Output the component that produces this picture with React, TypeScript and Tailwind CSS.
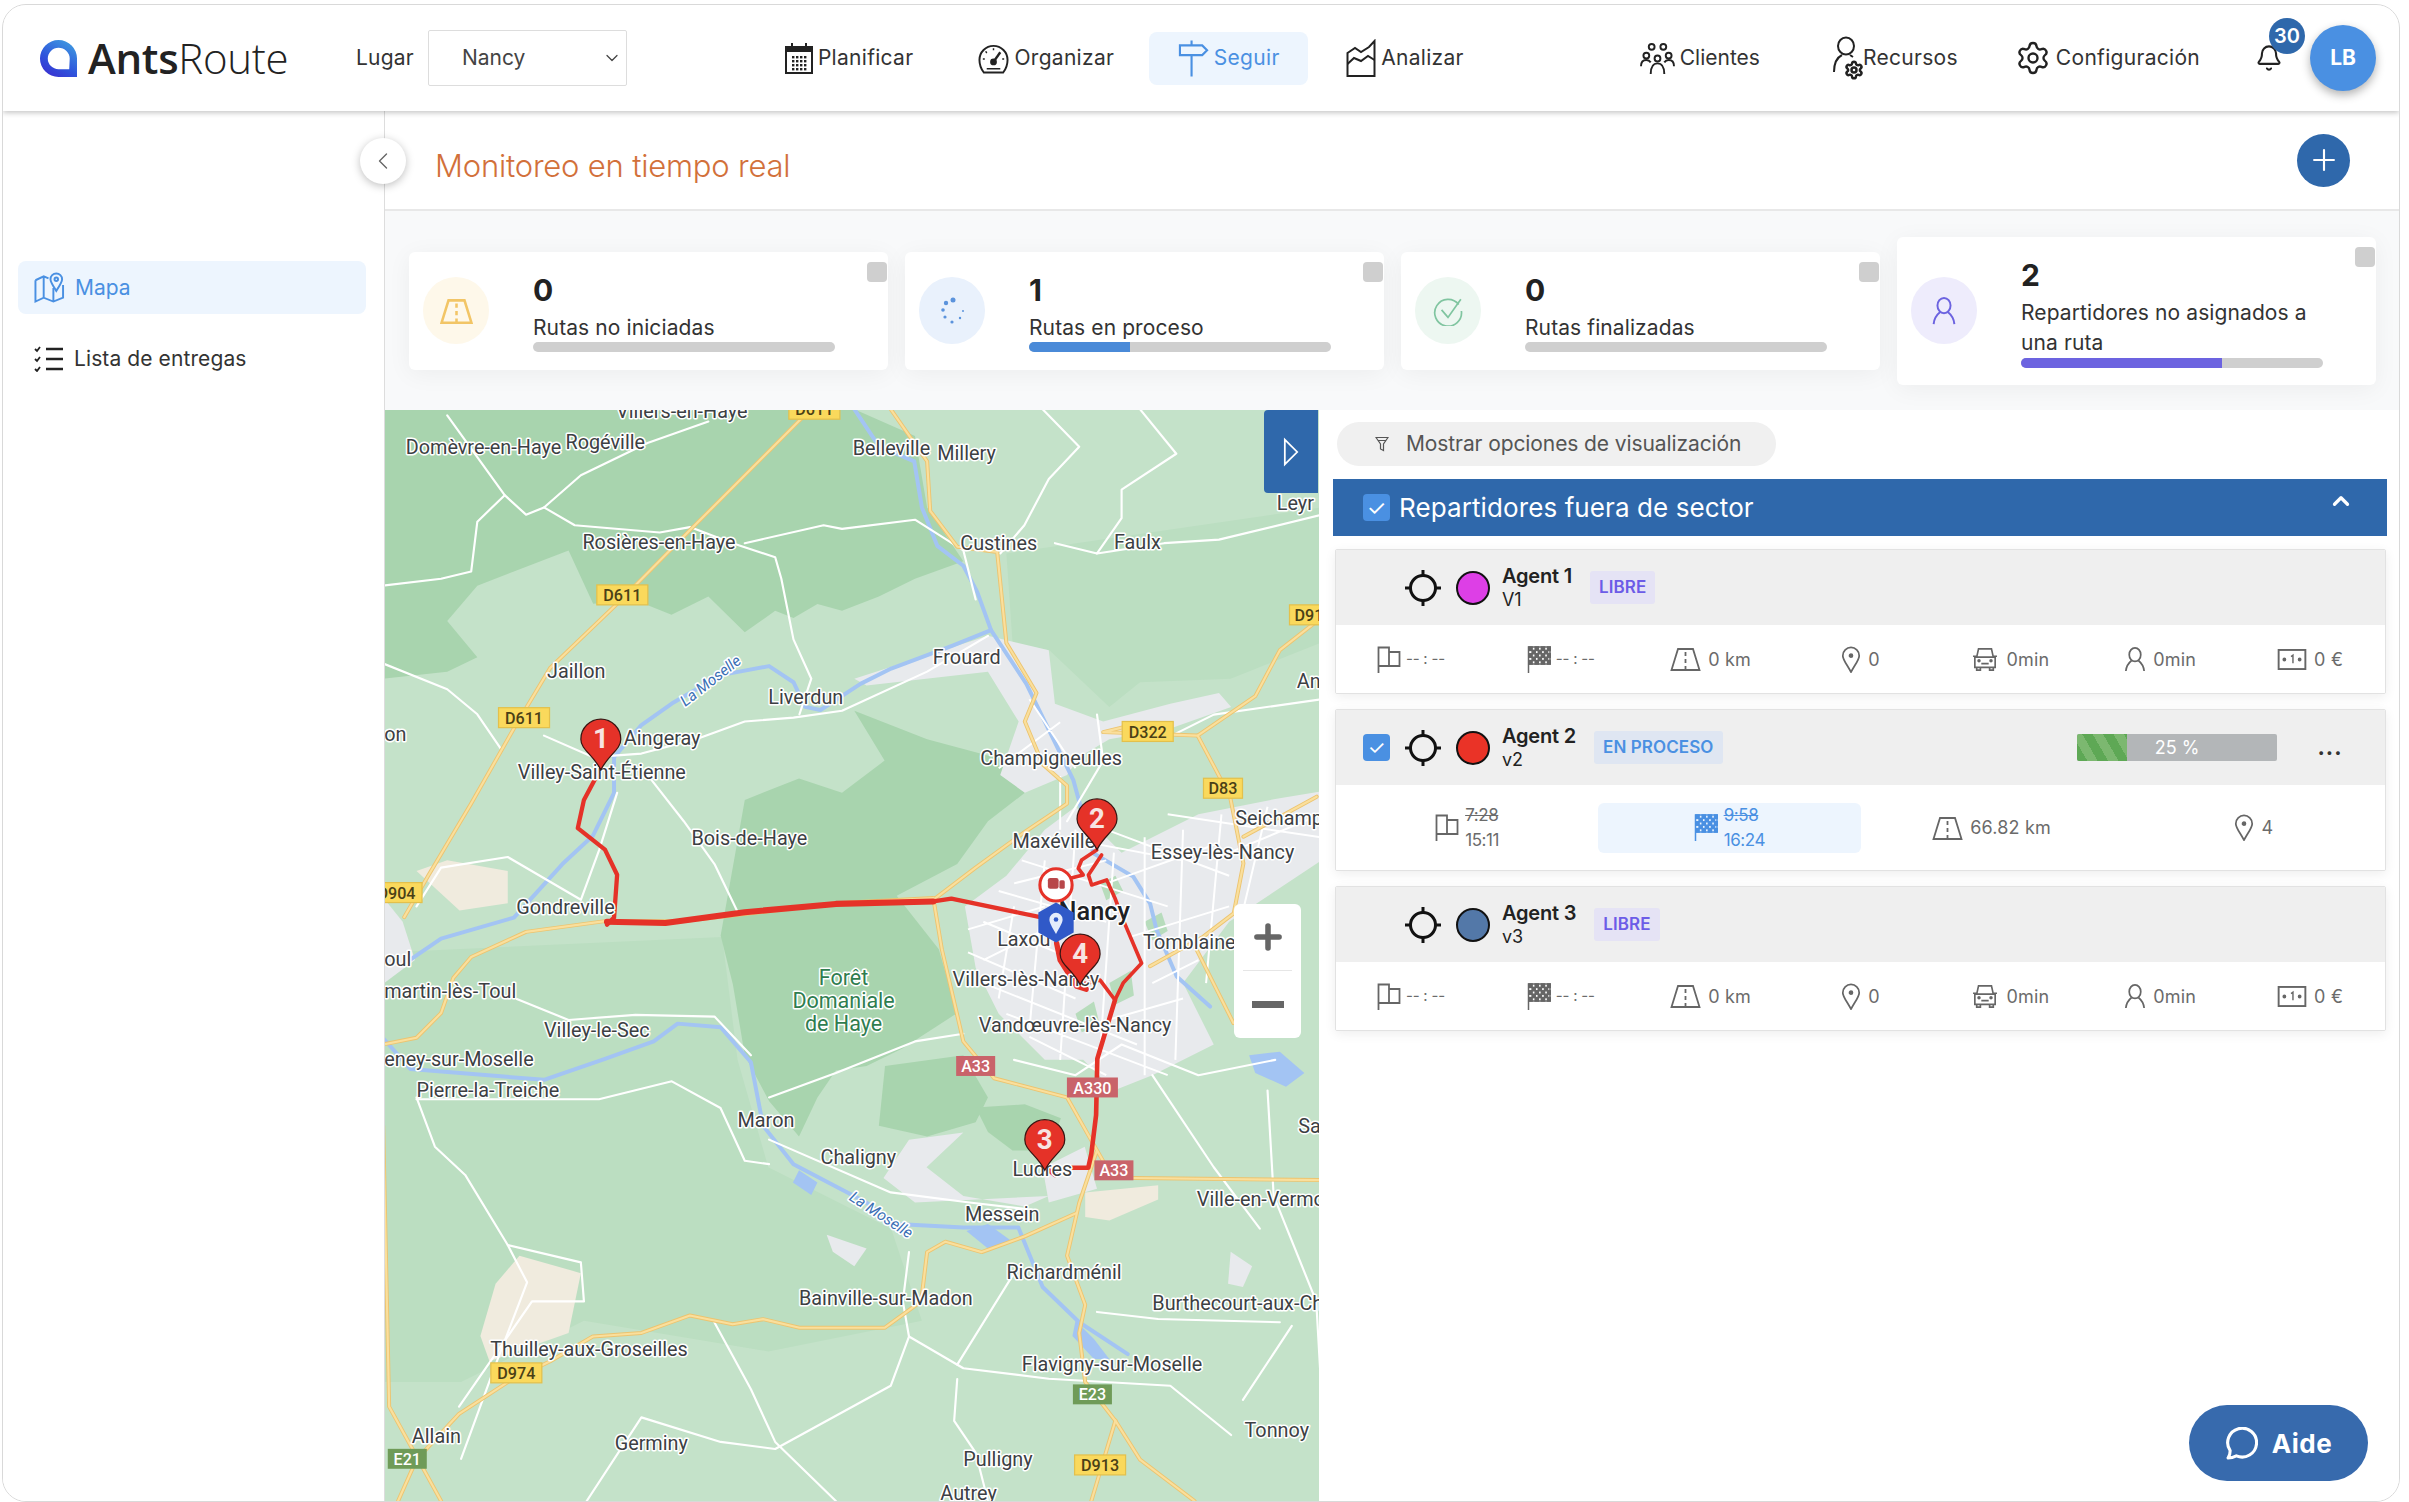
import { Bell, ChevronDown, ChevronLeft, ChevronUp, Plus, Settings } from "lucide-react";

const BLUE = "#4a90e2";

function Logo() {
  return (
    <svg viewBox="0 0 40 40" className="h-[39px] w-[39px] shrink-0">
      <defs>
        <linearGradient id="lg" x1="0.8" y1="0" x2="0.2" y2="1">
          <stop offset="0" stopColor="#3f9be0" />
          <stop offset="0.6" stopColor="#2f55dc" />
          <stop offset="1" stopColor="#3a2fd0" />
        </linearGradient>
      </defs>
      <path
        fill="url(#lg)"
        fillRule="evenodd"
        d="M20 1A19 19 0 0 0 20 39H39V20A19 19 0 0 0 20 1ZM20 9A11 11 0 1 0 20 31H31L31.500 20A11.500 11 0 0 0 20 9Z"
      />
    </svg>
  );
}

function CalendarIcon() {
  const dots = [];
  for (let r = 0; r < 4; r++) for (let c = 0; c < 4; c++) dots.push(<rect key={`${r}${c}`} x={7 + c * 4} y={13 + r * 4} width="2.400" height="2.400" />);
  return (
    <svg viewBox="0 0 28 31" className="h-[31px] w-[28px]" fill="#222">
      <rect x="1" y="4" width="26" height="26" fill="none" stroke="#222" strokeWidth="2" />
      <rect x="1" y="4" width="26" height="5" />
      <rect x="6" y="0" width="2" height="5" />
      <rect x="20" y="0" width="2" height="5" />
      {dots}
    </svg>
  );
}

function GaugeIcon() {
  return (
    <svg viewBox="0 0 32 34" className="h-[34px] w-[31px]" fill="none" stroke="#222" strokeWidth="2">
      <path d="M6 32C3 28 1.500 24 1.500 19A14.500 14.500 0 0 1 30.500 19C30.500 24 29 28 26 32Z" />
      <path d="M16 21L23 11" strokeWidth="2.500" />
      <circle cx="16" cy="21" r="2.500" fill="#222" />
      <path d="M16 7v2M8 10l1 2M5 18h2M25 18h2M9 28h14" strokeWidth="1.500" />
    </svg>
  );
}

function SignIcon() {
  return (
    <svg viewBox="0 0 32 38" className="h-[38px] w-[31px]" fill="none" stroke={BLUE} strokeWidth="2.200">
      <path d="M14 1v5M2 6h23l5 5-5 5H2ZM14 16v22" />
    </svg>
  );
}

function ChartIcon() {
  return (
    <svg viewBox="0 0 30 38" className="h-[38px] w-[30px]" fill="none" stroke="#222" strokeWidth="2">
      <path d="M1.500 14L9 9L15 13L23 8L28.500 2V37H1.500Z" />
      <path d="M1.500 25L8 19L15 22L22 17L28.500 21" />
    </svg>
  );
}

function ClientsIcon() {
  return (
    <svg viewBox="0 0 36 34" className="h-[33px] w-[35px]" fill="none" stroke="#222" strokeWidth="2">
      <circle cx="12" cy="5" r="3" />
      <circle cx="24" cy="5" r="3" />
      <circle cx="6.500" cy="14" r="3" />
      <circle cx="18" cy="17" r="3" />
      <circle cx="29.500" cy="14" r="3" />
      <path d="M1 25C1 20 3 18.500 6.500 18.500C8.500 18.500 10 19.500 11 21M25 21C26 19.500 27.500 18.500 29.500 18.500C33 18.500 35 20 35 25M11 33C11 25 14 22 18 22C22 22 25 25 25 33" />
    </svg>
  );
}

function ResourcesIcon() {
  return (
    <div className="relative mr-[-9px] h-[44px] w-[34px]">
      <svg viewBox="0 0 26 36" className="h-[38px] w-[26px]" fill="none" stroke="#222" strokeWidth="2">
        <ellipse cx="13" cy="9" rx="8" ry="8.500" />
        <path d="M1 35C1 25 5 20 9 18M17 18L20 20" />
      </svg>
      <Settings className="absolute bottom-0 right-[3px] h-[20px] w-[20px] text-[#222]" strokeWidth={3} />
    </div>
  );
}

function MapIcon() {
  return (
    <svg viewBox="0 0 32 32" className="h-[32px] w-[31px]" fill="none" stroke={BLUE} strokeWidth="2">
      <path d="M1.500 8L10 4L15 6M1.500 8V30L10 26L20 30L30 26V13M10 4V26M20 16V30" />
      <path d="M23 19C19 13 17 10 17 7A6 6 0 0 1 29 7C29 10 27 13 23 19Z" />
      <circle cx="23" cy="7" r="1.800" />
    </svg>
  );
}

function ListIcon() {
  return (
    <svg viewBox="0 0 30 26" className="h-[26px] w-[30px]" fill="none" stroke="#222" strokeWidth="2.500">
      <path d="M12 3h17M12 13h17M12 23h17" />
      <path d="M1 3l2 2 3-4M1 13l2 2 3-4M1 23l2 2 3-4" strokeWidth="1.800" />
    </svg>
  );
}

function RoadIcon({ color = "#666", className = "h-[24px] w-[31px]", width = 1.800 }: { color?: string; className?: string; width?: number }) {
  return (
    <svg viewBox="0 0 31 24" className={className} fill="none" stroke={color} strokeWidth={width}>
      <path d="M8 2H23L29.500 23H1.500ZM15.500 5V9M15.500 12V16M15.500 19V23" />
    </svg>
  );
}

function FlagIcon() {
  return (
    <svg viewBox="0 0 24 27" className="h-[27px] w-[24px]" fill="none" stroke="#666" strokeWidth="1.800">
      <path d="M1.500 27V1.500H12V20H1.500M12 6H22.500V20H12" />
    </svg>
  );
}

function CheckerFlagIcon({ color = "#666" }: { color?: string }) {
  const cells = [];
  for (let r = 0; r < 5; r++) for (let c = 0; c < 7; c++) if ((r + c) % 2 === 0) cells.push(<rect key={`${r}-${c}`} x={2 + c * 3.100} y={1 + r * 3.400} width="3.100" height="3.400" fill={color} />);
  return (
    <svg viewBox="0 0 24 27" className="h-[27px] w-[24px]" fill="none" stroke={color} strokeWidth="1.500">
      <path d="M1.500 27V1H23V18H1.500" />
      {cells}
    </svg>
  );
}

function PinIcon() {
  return (
    <svg viewBox="0 0 20 28" className="h-[27px] w-[20px]" fill="none" stroke="#666" strokeWidth="1.800">
      <path d="M10 27C5 18 1.500 14 1.500 10A8.500 8.500 0 0 1 18.500 10C18.500 14 15 18 10 27Z" />
      <circle cx="10" cy="10" r="1.500" fill="#666" />
    </svg>
  );
}

function CarIcon() {
  return (
    <svg viewBox="0 0 28 26" className="h-[24px] w-[28px]" fill="none" stroke="#666" strokeWidth="1.800">
      <path d="M5 11L7 2H21L23 11M1 10H5M23 10H27M3 11H25V22H3ZM5 22V25H9V22M19 22V25H23V22M10 18H18" />
      <circle cx="7.500" cy="15" r="1" fill="#666" />
      <circle cx="20.500" cy="15" r="1" fill="#666" />
    </svg>
  );
}

function PersonIcon({ color = "#666", className = "h-[25px] w-[22px]" }: { color?: string; className?: string }) {
  return (
    <svg viewBox="0 0 22 26" className={className} fill="none" stroke={color} strokeWidth="1.800">
      <ellipse cx="11" cy="8" rx="6" ry="7" />
      <path d="M1.500 25C2 19 5 16 7.500 14M14.500 14C17 16 20 19 20.500 25" />
    </svg>
  );
}

function MoneyIcon() {
  return (
    <svg viewBox="0 0 30 22" className="h-[21px] w-[30px]" fill="none" stroke="#666" strokeWidth="2">
      <rect x="1" y="1" width="28" height="20" />
      <path d="M14 8l2-1.500V15" strokeWidth="1.500" />
      <circle cx="7" cy="11" r="1" fill="#666" />
      <circle cx="23" cy="11" r="1" fill="#666" />
    </svg>
  );
}

function CrossHair() {
  return (
    <svg viewBox="0 0 36 36" className="h-[36px] w-[36px] shrink-0" fill="none" stroke="#111" strokeWidth="3">
      <circle cx="18" cy="18" r="12.500" />
      <path d="M18 0V6M18 30V36M0 18H6M30 18H36" />
    </svg>
  );
}

const forests = [
  "249,266 556,266 595.500,283.500 603.400,330 627,365 595.500,376.500 572,388 548,397.400 532,393 516.400,402 504.500,397.400 484.700,411.400 461,388 437,400 413.500,390.500 386,392.800 370,358 310.600,381 291,404 310.600,427.600 291,437 249,441.600",
  "484.700,520.600 520,506.600 548,516 575.700,495 556,462.500 603.400,481 655,495 667,516 643,534.500 623,562.400 583.600,583 611,618 623,659.500 587.600,682.400 564,694 544,697 532,714.500 520,740 500.600,717 484.700,687 477,641 469,609",
  "576,694 627,687 643,714.500 635,730.600 603.400,740 572,733",
  "635,721 667,719 690.500,728 682.600,749 659,749 643,737",
];
const midGreen = ["655,360 860,330 860,418 801,441.600 742,444 722,460 683,423 659,418", "250,620 470,610 480,690 500,760 580,800 600,860 500,880 380,860 300,900 250,900"];
const urban = [
  "628,590 655,570 680,540 700,525 730,555 780,530 830,520 860,515 860,560 800,600 770,640 790,680 750,700 725,710 705,690 680,690 650,660 635,630",
  "556,441.600 643,413.700 682.600,423 686.600,458 718,469.500 761.700,458 793.400,450.900 801.300,460 761.700,474 722,481 702.400,492.700 694.500,504.300 667,516 651,504.300 663,469.500 643,437 564,446",
  "575,767 591.600,742 627,737.400 603,760 627,778.700 667,785.500 682.600,778.700 595.500,783",
  "678.600,760.300 706,746.600 714,774 682.600,783",
  "538,804 564,813 556,824.500 542,815",
  "801,815 815,824.500 809,838 799.300,836",
  "250,585 262,600 270,625 250,640",
];
const beige = [
  "322.500,836 338,817.600 378,829 370,868 318.500,886.400 312.600,870",
  "271,567 291,560 330.400,567 330.400,588 299,592.600",
  "706.300,776.400 753.800,771.800 753.800,781 722,794.700 706.300,792.400",
];
const parks = ["716,575 726,570 731,580 720,586", "722,640 736,632 738,648 726,654", "700,660 712,652 716,668 704,672", "745,600 756,594 760,606 750,612"];
const lakes = ["813,687 833,684.700 849,698.500 837,707.600 817,698.500", "629,801.600 643,797 659,808.500 643,813", "520,762 532,770 528,778 516,770", "700,860 712,872 722,885 712,885 698,870"];
const rivers = [
  "556,266 572,290 595,300 600,330 610,355 627,368 636,385 645,410 620,420 580,435 560,445 534,462 524,460 516.400,443.900 500.500,433.400 469,439.300 437.200,457.800 417.400,471.800 399.600,492.700 399.600,516 385.800,544 366,562.400 334.400,597.300 287,611 267,624.700",
  "249,675.600 267,696 354,703 393.700,689.300 425.400,678 441,666.400 469,668.700 488.700,691.600 496.600,732.900 516.400,758 563.900,783 583.600,797 627,799.300 662.800,799.300 678.600,838 702.400,861 734,881.800",
  "645,410 668,445 698.600,507.700 711.600,555.400 737.600,570.600 748.500,588 752.800,605.400 765.900,635.700 787.600,655.300",
];
const whiteRoads = [
  "291,270 328.400,322 342.300,334.700 354,330 374,341.600 429.300,346.300 449,342.800 476.800,353.300 504.500,362.500 508.500,376.500 516.400,416 528,441.600 520.300,464.800",
  "328.400,322 310.600,339.300 306.600,371.800 287,376.500 249,381",
  "484.700,353.300 536,341.600 548,344 595.500,338 627,358 635,390",
  "354,330 378,309 421.400,288 461,274",
  "678.600,266 702.400,290.500 682.600,311.400 666.700,341.600 651,360",
  "742,266 765.600,295 730,318.400 730,337 714,360 686.600,353.300",
  "714,360 757.700,353.300 793.400,351 860.600,334.700",
  "250,432 291,448.500 310.600,464.800 326.400,488",
  "354,478.700 385.800,492.700 417.400,490.400 453,481 484.700,469.500 516.400,467 548,462.500 603.400,437 643,413.700",
  "421.400,504.300 445,534.500 465,562.400 480.700,595",
  "401.600,516 390,553 378,585.700 330.400,557.800 287,564.700 271,590",
  "714,465 718,495 694.500,534.500",
  "336.300,650.400 370,664 413.500,660.700 465,661.800 488.700,687",
  "271,714.500 283,746.600 302.700,765 330.400,810.700 378,822 380,847.400 346.200,847.400 298.700,916",
  "271,715.700 389.800,715.700 437.200,704 468.900,721.400 484.700,755.800 500.500,758",
  "500.500,714.500 544,698.500 595.500,678 627,673",
  "500.500,742 579.700,776.400 631,783 674.600,788",
  "591.600,815.300 587.600,847.400 591.600,870.300 627,891 682.600,897.800 761.700,902.400 801.300,934.500",
  "464.900,861 488.700,904.700 504.500,939 544,977.500",
  "591.600,870.300 579.700,902.400 504.500,943.600 469,939 417.400,923 381.800,977.500",
  "623,898 621,925.300 635,946 643,977.500",
  "714,854.300 753.800,858.900 833,861",
  "825,710 829,778.700 856.700,847.400 860.600,916",
  "662.800,824.500 623,888.600",
  "840.800,863.400 809,911.600",
  "330.400,810.700 343,835 322,890 300,950",
  "760,480 790,465 860,455",
  "660,690 700,700 730,680 780,700 830,690",
  "750,700 790,760 820,800",
];
const cityStreets = "M640 600L700 625M650 580L720 600M665 560L760 590M690 545L770 560M720 540L800 570M760 530L860 545M630 620L700 650M640 640L740 680M655 660L760 700M670 675L720 700M660 590L650 650M680 560L670 670M700 540L690 690M725 555L715 700M745 545L745 700M770 540L765 690M795 530L785 640M825 525L805 610M650 500L690 470M670 455L700 500M690 505L690 540M630 605L680 590M640 625L690 600M720 575L790 550M735 610L800 590M750 640L780 625M700 670L770 650M660 575L720 560M800 555L860 530";
const yellowRoads = [
  "524,269.600 451,342.800 401.600,392.800 358,434.600 334.400,474 306.600,523 279,569.400 263,597",
  "579.700,266 603.400,300 605.400,332.300 623,355.600 649,359 655,418.300 674.600,450.900 667,469.500 678.600,497.300 694.500,511.300 694.500,523 667,541.500 635,564.700 607.400,585.700",
  "249,680 271,675.600 287,659.500 295,636.600 306.600,623 342.300,606.600 393.700,599.600 445,599.600 544,588 607.400,584.500",
  "607.400,584.500 613,618 627,678 647,702 694.500,714.500 710,742 718,756 714,749 702.400,783.300 694.500,817.600 706.300,849.700 702.400,868 706.300,900 726,925.300 742,950.500 777.500,977.500",
  "726,925 710.300,977.500",
  "738,767 860,768.400",
  "700.400,790 667,805 639,815.300 615.300,808.500 603.400,815.300 599.500,847.400 575.700,864.600 520.300,864.600 496.600,859 476.800,862.300 449,856.600 417.400,868 385.800,870.300 358,886.400 330.400,900 298.700,920.700 271,950.500 259,977.500",
  "249.300,733 253.200,916 287,977.500",
  "856.700,404.400 833,423 817,453 779.500,478.700 718,476.400 742,470.600",
  "779.500,478.700 800.600,518.500 809.300,562 803,594.500 783.200,609.700 748.500,629",
  "776.700,614 802.800,666",
  "857,518.500 809.300,544.600",
];
const labels: [string, number, number][] = [
  ["Villers-en-Haye", 401, 272], ["Domèvre-en-Haye", 264, 295], ["Rogéville", 368, 292], ["Belleville", 555, 296], ["Millery", 610, 299], ["Leyr", 831, 332],
  ["Rosières-en-Haye", 379, 357], ["Custines", 625, 358], ["Faulx", 725, 357], ["Jaillon", 356, 441], ["Frouard", 607, 432], ["Liverdun", 500, 458], ["Aingeray", 406, 485],
  ["Villey-Saint-Étienne", 337, 507], ["on", 250, 482], ["An", 844, 448], ["Champigneulles", 638, 498], ["Seichamp", 804, 537], ["Bois-de-Haye", 450, 550], ["Maxéville", 659, 552],
  ["Essey-lès-Nancy", 749, 559], ["Gondreville", 336, 595], ["Laxou", 649, 616], ["Tomblaine", 744, 618], ["Villers-lès-Nancy", 620, 642], ["martin-lès-Toul", 250, 650], ["oul", 250, 629],
  ["Villey-le-Sec", 354, 675], ["Vandœuvre-lès-Nancy", 637, 672], ["eney-sur-Moselle", 250, 694], ["Pierre-la-Treiche", 271, 714], ["Maron", 480, 734], ["Chaligny", 534, 758], ["Ludres", 659, 766],
  ["Sa", 845, 738], ["Ville-en-Vermois", 779, 785], ["Messein", 628, 795], ["Richardménil", 655, 833], ["Bainville-sur-Madon", 520, 850], ["Burthecourt-aux-Chênes", 750, 853],
  ["Thuilley-aux-Groseilles", 319, 883], ["Flavigny-sur-Moselle", 665, 893], ["Tonnoy", 810, 936], ["Allain", 268, 940], ["Germiny", 400, 944], ["Pulligny", 627, 955], ["Autrey", 612, 977],
];
const shields: [string, number, number, string][] = [
  ["D611", 405, 387, "y"], ["D611", 341, 467, "y"], ["D322", 747, 476, "y"], ["D83", 796, 513, "y"], ["D91", 852, 400, "y"], ["D904", 258, 581, "y"], ["D611", 530, 266, "y"],
  ["A33", 635, 694, "r"], ["A330", 711, 708, "r"], ["A33", 725, 762, "r"], ["D974", 336, 894, "y"], ["E23", 711, 908, "g"], ["E21", 265, 950, "g"], ["D913", 716, 954, "y"],
];

function MapPin({ x, tip, n }: { x: number; tip: number; n: string }) {
  const c = tip - 20;
  return (
    <g>
      <path
        d={`M${x} ${tip}C${x - 5} ${tip - 10} ${x - 13} ${c + 7} ${x - 13} ${c}A13 13 0 1 1 ${x + 13} ${c}C${x + 13} ${c + 7} ${x + 5} ${tip - 10} ${x} ${tip}Z`}
        fill="#e53228"
        stroke="#3a1512"
        strokeWidth="0.800"
      />
      <text x={x} y={c + 6} textAnchor="middle" fontSize="18" fontWeight="700" fill="#f7e4e2">
        {n}
      </text>
    </g>
  );
}

function Pts({ items, color, width }: { items: string[]; color: string; width: number }) {
  return (
    <>
      {items.map((p, i) => (
        <polyline key={i} points={p} fill="none" stroke={color} strokeWidth={width} strokeLinejoin="round" strokeLinecap="round" />
      ))}
    </>
  );
}

function MapArt() {
  return (
    <svg viewBox="250.500 266.500 608 711" className="h-full w-full font-['Roboto',sans-serif]" preserveAspectRatio="none">
      <rect x="250" y="266" width="612" height="712" fill="#c4e2c9" />
      {midGreen.map((p) => <polygon key={p} points={p} fill="#bbdec1" />)}
      {forests.map((p) => <polygon key={p} points={p} fill="#a8d4ae" />)}
      {beige.map((p) => <polygon key={p} points={p} fill="#f0ebde" />)}
      {urban.map((p) => <polygon key={p} points={p} fill="#e8eaed" />)}
      {parks.map((p) => <polygon key={p} points={p} fill="#b7dcbc" />)}
      <Pts items={rivers} color="#a3c4f3" width={2.600} />
      {lakes.map((p) => <polygon key={p} points={p} fill="#a3c4f3" />)}
      <Pts items={whiteRoads} color="#ffffff" width={1.400} />
      <path d={cityStreets} stroke="#ffffff" strokeWidth="1.300" fill="none" />
      <Pts items={yellowRoads} color="#ecc470" width={2.600} />
      <Pts items={yellowRoads} color="#fadf9c" width={1.400} />
      <g fill="none" stroke="#e53228" strokeLinejoin="round" strokeLinecap="round">
        <polyline strokeWidth="2.800" points="391,500 380,520.600 376,539 393.700,553 401.600,569.400 399.600,597.300 395,602" />
        <polyline strokeWidth="4" points="395,600 433,600.800 484.700,593.800 544,588.400 607.400,586.800" />
        <polyline strokeWidth="2.800" points="607.400,586.800 619.200,585 678.600,597.300" />
        <polyline strokeWidth="2.400" points="713.800,553.300 704,559.800 701.800,565.200 705,569.500 692,572.800" />
        <polyline strokeWidth="2.400" points="717,556.500 708.400,569.500 710.500,576 720.300,572.800 725.700,584.700 731,598.800 743,627 731,640 725.700,651 716,638 711.600,639 703,641" />
        <polyline strokeWidth="3" points="725.700,651 714.200,689.300 713.400,726 710.300,751.200 708.300,760.300 694.500,760.300 686.600,765 680.600,760.300" />
        <polyline strokeWidth="3.500" points="687.700,614 690,625 700.800,642 707,644" />
      </g>
      {shields.map(([t, x, y, k]) => (
        <g key={t + x}>
          <rect
            x={x - t.length * 3.900 - 1}
            y={y - 6.500}
            width={t.length * 7.800 + 2}
            height="13"
            fill={k === "y" ? "#fad95c" : k === "r" ? "#c9636a" : "#6f9b58"}
            stroke={k === "y" ? "#e3c04c" : "none"}
            strokeWidth="0.800"
          />
          <text x={x} y={y + 4} textAnchor="middle" fontSize="10.500" fontWeight="500" fill={k === "y" ? "#4a4016" : "#ffffff"}>
            {t}
          </text>
        </g>
      ))}
      <g fontSize="12.900" fill="#3c4043" stroke="#ffffff" strokeWidth="2" paintOrder="stroke" strokeLinejoin="round">
        {labels.map(([t, x, y]) => (
          <text key={t} x={x} y={y}>
            {t}
          </text>
        ))}
        <text x="689" y="599" fontSize="16.500" fontWeight="500" fill="#202124">
          Nancy
        </text>
        <g fill="#2f7d4f" fontSize="14" textAnchor="middle">
          <text x="549" y="641">Forêt</text>
          <text x="549" y="656">Domaniale</text>
          <text x="549" y="671">de Haye</text>
        </g>
        <text transform="translate(446 460) rotate(-38)" fontSize="10" fontStyle="italic" fill="#3b6fb5">La Moselle</text>
        <text transform="translate(552 781) rotate(33)" fontSize="10" fontStyle="italic" fill="#3b6fb5">La Moselle</text>
      </g>
      <MapPin x={391} tip={501} n="1" />
      <MapPin x={714} tip={553} n="2" />
      <MapPin x={680} tip={762} n="3" />
      <circle cx="687.300" cy="576" r="10.500" fill="#ffffff" stroke="#e53228" strokeWidth="2" />
      <rect x="682" y="571.500" width="7" height="7" rx="1.500" fill="#b8474a" />
      <rect x="689.500" y="573" width="3.500" height="5.500" rx="1" fill="#b8474a" />
      <polygon points="687.300,587.500 698.800,594 698.800,607 687.300,613.500 675.800,607 675.800,594" fill="#3059c8" />
      <MapPin x={703} tip={641} n="4" />
      <path d="M687.300 608C684.500 603 683 600.500 683 598.500A4.300 4.300 0 0 1 691.600 598.500C691.600 600.500 690 603 687.300 608Z" fill="#e4ecfb" />
      <circle cx="687.300" cy="598.500" r="1.500" fill="#3059c8" />
    </svg>
  );
}

function StatCard({
  n,
  label,
  tone,
  icon,
  fill,
  fillColor,
  tall,
}: {
  n: string;
  label: React.ReactNode;
  tone: string;
  icon: React.ReactNode;
  fill: string;
  fillColor: string;
  tall?: boolean;
}) {
  return (
    <div className={`relative flex w-[479px] shrink-0 items-center rounded-md bg-white pl-[14px] shadow-[0_4px_24px_rgba(0,0,0,0.05)] ${tall ? "h-[148px]" : "h-[118px]"}`}>
      <div className={`flex h-[67px] w-[66px] shrink-0 items-center justify-center rounded-full ${tone}`}>{icon}</div>
      <div className={`ml-[44px] w-[302px] ${tall ? "pt-[3px]" : "pt-[2px]"}`}>
        <div className="text-[30px] font-bold leading-[36px] text-[#222]">{n}</div>
        <div className="mt-[5px] text-[21px] leading-[30px] tracking-[0.1px] text-[#333]">{label}</div>
        <div className={`h-[10px] overflow-hidden rounded-full bg-[#cfcfcf] ${tall ? "" : "mt-[-1px]"}`}>
          <div className={`h-full ${fill} ${fillColor}`} />
        </div>
      </div>
      <div className="absolute right-[1px] top-[10px] h-[20px] w-[20px] rounded-sm bg-[#cfcfcf]" />
    </div>
  );
}

function NavItem({ icon, label, active, className = "" }: { icon: React.ReactNode; label: string; active?: boolean; className?: string }) {
  return (
    <div className={`flex h-[53px] items-center gap-[5px] text-[21px] tracking-[0.3px] ${active ? "rounded-lg bg-[#edf5fe] text-[#4a90e2]" : "text-[#333]"} ${className}`}>
      {icon}
      <span>{label}</span>
    </div>
  );
}

function Stat({ icon, text, time }: { icon: React.ReactNode; text: string; time?: boolean }) {
  return (
    <div className={`flex items-center justify-center text-[#6b6b6b] ${time ? "gap-[5px] text-[15px] tracking-[-0.2px]" : "gap-[7px] text-[18px] tracking-[0.2px]"}`}>
      {icon}
      <span>{text}</span>
    </div>
  );
}

function AgentHeader({ check, color, name, sub, badge, badgeClass, children }: { check?: boolean; color: string; name: string; sub: string; badge: string; badgeClass: string; children?: React.ReactNode }) {
  return (
    <div className="flex h-[75px] items-center bg-[#efefef] pl-[27px]">
      <div className={`mr-[15px] flex h-[27px] w-[27px] items-center justify-center rounded-sm text-[20px] leading-none text-white ${check ? "bg-[#4a90e2]" : ""}`}>{check ? "✓" : ""}</div>
      <CrossHair />
      <div className="ml-[15px] flex h-[34px] w-[34px] shrink-0">
        <div className={`h-full w-full rounded-full border-2 border-[#111] ${color}`} />
      </div>
      <div className="ml-[12px] shrink-0 whitespace-nowrap text-[20px] leading-[24px] tracking-[-0.2px] text-[#222]">
        <div className="font-semibold">{name}</div>
        <div className="text-[18px]">{sub}</div>
      </div>
      <div className={`ml-[18px] flex h-[33px] items-center rounded-[3px] px-[9px] text-[17px] font-semibold tracking-[0.1px] ${badgeClass}`}>{badge}</div>
      {children}
    </div>
  );
}

function EmptyStats() {
  return (
    <div className="grid h-[68px] grid-cols-7 items-center bg-white">
      <Stat time icon={<FlagIcon />} text="-- : --" />
      <Stat time icon={<CheckerFlagIcon />} text="-- : --" />
      <Stat icon={<RoadIcon />} text="0 km" />
      <Stat icon={<PinIcon />} text="0" />
      <Stat icon={<CarIcon />} text="0min" />
      <Stat icon={<PersonIcon />} text="0min" />
      <Stat icon={<MoneyIcon />} text="0 €" />
    </div>
  );
}

const cardClass = "overflow-hidden rounded-[2px] border border-[#e2e2e2] bg-white shadow-[0_3px_12px_rgba(0,0,0,0.07)]";

export default function App() {
  return (
    <div className="relative h-[1502px] w-[2409px] overflow-hidden bg-white pl-[2px] pr-[9px] pt-[4px] font-['Inter',sans-serif]">
      <div className="relative flex h-full flex-col overflow-hidden rounded-[24px] border border-[#d9d9d9] bg-white">
        <header className="relative z-10 flex h-[106px] shrink-0 items-center bg-white pl-[36px] shadow-[0_2px_5px_rgba(0,0,0,0.22)]">
          <Logo />
          <div className="ml-[10px] w-[268px] whitespace-nowrap font-['Open_Sans',sans-serif] text-[42px] leading-none tracking-[-0.3px] text-[#222]">
            <span className="font-semibold">Ants</span>
            <span className="font-light">Route</span>
          </div>
          <span className="text-[21px] tracking-[0.2px] text-[#333]">Lugar</span>
          <div className="ml-[14px] flex h-[56px] w-[199px] items-center justify-between rounded-[2px] border border-[#ddd] pl-[33px] pr-[4px] text-[21px] text-[#444]">
            Nancy
            <ChevronDown className="h-[20px] w-[20px] text-[#444]" strokeWidth={1.500} />
          </div>
          <NavItem icon={<CalendarIcon />} label="Planificar" className="ml-[158px]" />
          <NavItem icon={<GaugeIcon />} label="Organizar" className="ml-[65px]" />
          <NavItem icon={<SignIcon />} label="Seguir" active className="ml-[35px] w-[159px] justify-center" />
          <NavItem icon={<ChartIcon />} label="Analizar" className="ml-[38px]" />
          <NavItem icon={<ClientsIcon />} label="Clientes" className="ml-[176px] gap-[1px] tracking-[0px]" />
          <NavItem icon={<ResourcesIcon />} label="Recursos" className="ml-[73px] gap-0 text-[20px] tracking-[-0.5px]" />
          <NavItem icon={<Settings className="h-[36px] w-[36px] text-[#222]" strokeWidth={1.600} />} label="Configuración" className="ml-[57px] gap-0" />
          <div className="relative ml-[55px] h-[34px] w-[28px]">
            <Bell className="h-[34px] w-[28px] text-[#222]" strokeWidth={1.800} />
            <div className="absolute left-[14px] top-[-23px] flex h-[36px] w-[36px] items-center justify-center rounded-full bg-[#2f68ab] text-[20px] font-semibold text-white">30</div>
          </div>
          <div className="ml-[27px] flex h-[66px] w-[66px] items-center justify-center rounded-full bg-[#4a90e2] text-[21px] font-bold text-white shadow-[0_4px_10px_rgba(0,0,0,0.3)]">LB</div>
        </header>

        <div className="flex min-h-0 flex-1">
          <aside className="relative w-[382px] shrink-0 border-r border-[#ddd] bg-white pl-[15px] pr-[18px] pt-[150px]">
            <div className="flex h-[53px] items-center gap-[10px] rounded-lg bg-[#edf5fe] pl-[16px] text-[21px] text-[#4a90e2]">
              <MapIcon />
              Mapa
            </div>
            <div className="mt-[18px] flex h-[53px] items-center gap-[10px] pl-[16px] text-[21px] tracking-[0.1px] text-[#333]">
              <ListIcon />
              Lista de entregas
            </div>
            <div className="absolute right-[-22px] top-[27px] z-10 flex h-[46px] w-[46px] items-center justify-center rounded-full bg-white shadow-[0_2px_8px_rgba(0,0,0,0.25)]">
              <ChevronLeft className="h-[28px] w-[28px] text-[#666]" strokeWidth={1.200} />
            </div>
          </aside>

          <main className="flex min-w-0 flex-1 flex-col">
            <div className="flex h-[100px] shrink-0 items-center justify-between border-b-2 border-[#e8e8e8] pl-[50px] pr-[49px]">
              <h1 className="mt-[12px] text-[31px] font-light tracking-[-0.2px] text-[#d2703a]">Monitoreo en tiempo real</h1>
              <div className="flex h-[53px] w-[53px] items-center justify-center rounded-full bg-[#2f68ab]">
                <Plus className="h-[34px] w-[34px] text-white" strokeWidth={1.500} />
              </div>
            </div>

            <div className="flex h-[199px] shrink-0 items-center gap-[17px] bg-[#f8f9fa] pl-[24px]">
              <StatCard n="0" label="Rutas no iniciadas" tone="bg-[#fef8ea]" fill="w-0" fillColor="bg-[#cfcfcf]" icon={<RoadIcon color="#f2c566" width={2.400} className="h-[26px] w-[33px]" />} />
              <StatCard
                n="1"
                label="Rutas en proceso"
                tone="bg-[#e9f1fc]"
                fill="w-1/3"
                fillColor="bg-[#4a8ad8]"
                icon={
                  <svg viewBox="0 0 28 28" className="h-[28px] w-[28px]" fill="#5b93dc">
                    <circle cx="15" cy="3" r="2.500" />
                    <circle cx="8" cy="6" r="2.200" />
                    <circle cx="5" cy="13" r="1.800" />
                    <circle cx="7" cy="20" r="1.600" />
                    <circle cx="14" cy="25" r="1.600" />
                    <circle cx="22" cy="21" r="1.200" />
                    <circle cx="25" cy="14" r="1" />
                  </svg>
                }
              />
              <StatCard
                n="0"
                label="Rutas finalizadas"
                tone="bg-[#edf7f1]"
                fill="w-0"
                fillColor="bg-[#cfcfcf]"
                icon={
                  <svg viewBox="0 0 28 28" className="h-[30px] w-[30px]" fill="none" stroke="#80c5a0" strokeWidth="1.600">
                    <path d="M24 8A12.500 12.500 0 1 0 26.500 14" />
                    <path d="M8 13l6 7L26 3" />
                  </svg>
                }
              />
              <StatCard
                tall
                n="2"
                label={
                  <>
                    Repartidores no asignados a
                    <br />
                    una ruta
                  </>
                }
                tone="bg-[#eeecfc]"
                fill="w-2/3"
                fillColor="bg-[#6c63e0]"
                icon={<PersonIcon color="#6c63e0" className="h-[30px] w-[24px]" />}
              />
            </div>

            <div className="flex min-h-0 flex-1">
              <div className="relative w-[934px] shrink-0 overflow-hidden">
                <MapArt />
                <div className="absolute right-[1px] top-0 flex h-[83px] w-[54px] items-center justify-center rounded-l-sm bg-[#2f68ab]">
                  <svg viewBox="0 0 20 34" className="h-[30px] w-[18px]" fill="none" stroke="#fff" strokeWidth="2">
                    <path d="M3 3L17 17L3 31Z" />
                  </svg>
                </div>
                <div className="absolute right-[18px] top-[494px] flex h-[134px] w-[67px] flex-col items-center rounded-md bg-white px-[9px]">
                  <div className="flex h-[67px] w-full items-center justify-center border-b border-[#e6e6e6]">
                    <Plus className="h-[38px] w-[38px] text-[#666]" strokeWidth={3.500} />
                  </div>
                  <div className="flex h-[67px] items-center">
                    <div className="h-[7px] w-[32px] bg-[#666]" />
                  </div>
                </div>
              </div>

              <section className="min-w-0 flex-1 bg-white pl-[14px] pr-[12px] pt-[12px]">
                <div className="ml-[4px] flex h-[44px] w-[439px] items-center rounded-full bg-[#f0f0f0] pl-[38px] text-[21px] tracking-[-0.1px] text-[#555]">
                  <svg viewBox="0 0 14 16" className="mr-[17px] h-[16px] w-[14px]" fill="none" stroke="#555" strokeWidth="1.200">
                    <path d="M1 1.500H13L8.500 8V14.500L5.500 13V8ZM3 4.500H11" />
                  </svg>
                  Mostrar opciones de visualización
                </div>
                <div className="mt-[13px] flex h-[57px] items-center justify-between bg-[#2f68ab] pl-[30px] pr-[33px] text-[26px] tracking-[0.1px] text-white">
                  <div className="flex items-center gap-[9px]">
                    <div className="flex h-[27px] w-[27px] items-center justify-center rounded-sm bg-[#4a90e2] text-[22px] leading-none">✓</div>
                    Repartidores fuera de sector
                  </div>
                  <ChevronUp className="mb-[14px] h-[26px] w-[26px]" strokeWidth={3} />
                </div>

                <div className="ml-[2px] mr-[1px] mt-[13px] flex flex-col gap-[15px]">
                  <div className={cardClass}>
                    <AgentHeader color="bg-[#dd3fe6]" name="Agent 1" sub="V1" badge="LIBRE" badgeClass="bg-[#e5e3f5] text-[#6c5ce7]" />
                    <EmptyStats />
                  </div>

                  <div className={cardClass}>
                    <AgentHeader check color="bg-[#ea3327]" name="Agent 2" sub="v2" badge="EN PROCESO" badgeClass="bg-[#dfe6f2] text-[#4a90e2]">
                      <div className="ml-auto flex h-[27px] w-[200px] overflow-hidden rounded-[2px] bg-[#b3b6b8]">
                        <div className="h-full w-[50px] bg-[repeating-linear-gradient(60deg,#5ea855_0,#5ea855_9px,#7cb870_9px,#7cb870_18px)]" />
                        <div className="flex-1 pr-[50px] text-center text-[18px] leading-[27px] text-white">25 %</div>
                      </div>
                      <div className="mb-[2px] ml-[38px] mr-[40px] w-[30px] text-center text-[22px] font-bold leading-none tracking-[1px] text-[#333]">...</div>
                    </AgentHeader>
                    <div className="grid h-[85px] grid-cols-4 items-center bg-white">
                      <div className="flex items-center justify-center gap-[6px] text-[17px] leading-[25px] tracking-[-0.4px] text-[#6b6b6b]">
                        <FlagIcon />
                        <div>
                          <div className="line-through">7:28</div>
                          <div>15:11</div>
                        </div>
                      </div>
                      <div className="flex h-[50px] items-center justify-center gap-[6px] rounded-md bg-[#edf5fe] text-[17px] leading-[25px] tracking-[-0.4px] text-[#4a90e2]">
                        <CheckerFlagIcon color="#4a90e2" />
                        <div>
                          <div className="line-through">9:58</div>
                          <div>16:24</div>
                        </div>
                      </div>
                      <Stat icon={<RoadIcon />} text="66.82 km" />
                      <Stat icon={<PinIcon />} text="4" />
                    </div>
                  </div>

                  <div className={cardClass}>
                    <AgentHeader color="bg-[#5378a8]" name="Agent 3" sub="v3" badge="LIBRE" badgeClass="bg-[#e5e3f5] text-[#6c5ce7]" />
                    <EmptyStats />
                  </div>
                </div>
              </section>
            </div>
          </main>
        </div>

        <div className="absolute bottom-[20px] right-[31px] z-20 flex h-[76px] w-[179px] items-center justify-center gap-[14px] rounded-full bg-[#376aad] text-[26px] font-bold tracking-[0.5px] text-white">
          <svg viewBox="0 0 32 32" className="h-[33px] w-[33px]" fill="none" stroke="#fff" strokeWidth="3">
            <path d="M3 30C6 30 9 29 11 28A14 14 0 1 0 5 23C5 26 4.500 28 3 30Z" strokeLinejoin="round" />
          </svg>
          Aide
        </div>
      </div>
    </div>
  );
}
